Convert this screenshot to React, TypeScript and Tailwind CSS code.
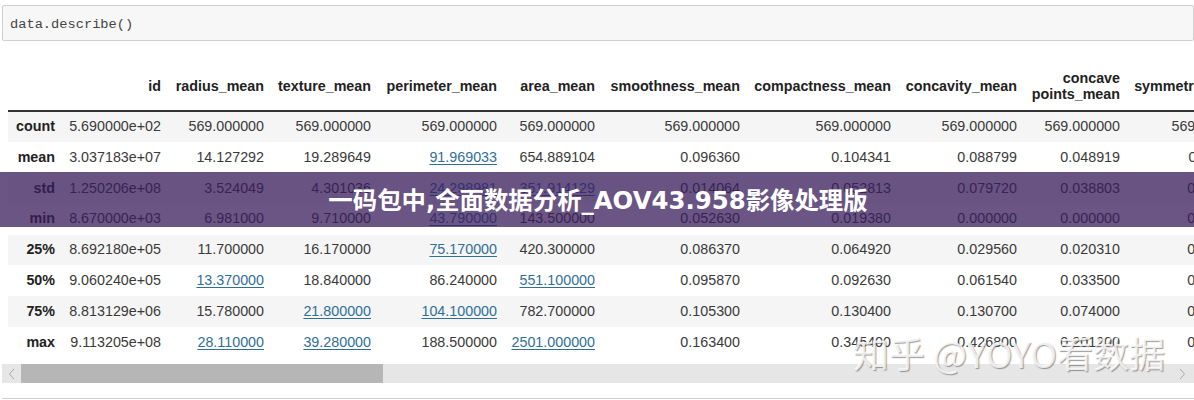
import React from 'react'

const columns = [
  { name: 'id', width: 'w-[106px]' },
  { name: 'radius_mean', width: 'w-[103px]' },
  { name: 'texture_mean', width: 'w-[107px]' },
  { name: 'perimeter_mean', width: 'w-[126px]' },
  { name: 'area_mean', width: 'w-[98px]' },
  { name: 'smoothness_mean', width: 'w-[145px]' },
  { name: 'compactness_mean', width: 'w-[151px]' },
  { name: 'concavity_mean', width: 'w-[126px]' },
  { name: 'concave points_mean', width: 'w-[103px]' },
  { name: 'symmetry_mean', width: 'w-[127px]' },
]

// a leading * marks the cells that are shown as links in the notebook
const rows = [
  ['count', '5.690000e+02', '569.000000', '569.000000', '569.000000', '569.000000', '569.000000', '569.000000', '569.000000', '569.000000', '569.000000'],
  ['mean', '3.037183e+07', '14.127292', '19.289649', '*91.969033', '654.889104', '0.096360', '0.104341', '0.088799', '0.048919', '0.181162'],
  ['std', '1.250206e+08', '3.524049', '4.301036', '*24.298981', '*351.914129', '0.014064', '0.052813', '0.079720', '0.038803', '0.027414'],
  ['min', '8.670000e+03', '6.981000', '9.710000', '*43.790000', '143.500000', '0.052630', '0.019380', '0.000000', '0.000000', '0.106000'],
  ['25%', '8.692180e+05', '11.700000', '16.170000', '*75.170000', '420.300000', '0.086370', '0.064920', '0.029560', '0.020310', '0.161900'],
  ['50%', '9.060240e+05', '*13.370000', '18.840000', '86.240000', '*551.100000', '0.095870', '0.092630', '0.061540', '0.033500', '0.179200'],
  ['75%', '8.813129e+06', '15.780000', '*21.800000', '*104.100000', '782.700000', '0.105300', '0.130400', '0.130700', '0.074000', '0.195700'],
  ['max', '9.113205e+08', '*28.110000', '*39.280000', '188.500000', '*2501.000000', '0.163400', '0.345400', '0.426800', '0.201200', '0.304000'],
]

function Cell({ value }: { value: string }) {
  if (value.startsWith('*')) {
    return <span className="text-[#2f6f96] underline underline-offset-2">{value.slice(1)}</span>
  }
  return <>{value}</>
}

export default function App() {
  return (
    <div className="relative h-[400px] w-[1194px] overflow-hidden bg-white font-['Liberation_Sans',sans-serif] text-[14.3px] text-[#3a3a3a]">
      <div className="pl-[2px] pt-[5px]">
        <div className="h-[36px] rounded-[2px] border border-[#cfcfcf] bg-[#f7f7f7] pl-[7px] pt-[1px] font-['Liberation_Mono',monospace] text-[13.7px] leading-[35px] text-[#444]">
          data.describe()
        </div>
      </div>

      <div className="mt-[22px] overflow-hidden pl-[8px]">
        <table className="w-[1246px] table-fixed border-collapse">
          <colgroup>
            <col className="w-[54px]" />
            {columns.map((col) => (
              <col key={col.name} className={col.width} />
            ))}
          </colgroup>
          <thead>
            <tr className="h-[48px] border-b-2 border-[#333]">
              <th />
              {columns.map((col) => (
                <th key={col.name} className="pb-[1px] pr-[7px] text-right align-middle font-bold leading-[16px] text-[#222]">
                  {col.name}
                </th>
              ))}
            </tr>
          </thead>
          <tbody>
            {rows.map((row, i) => (
              <tr key={row[0]} className={`h-[30.9px] ${i % 2 === 0 ? 'bg-[#f5f5f5]' : 'bg-white'}`}>
                <th className="pr-[7px] text-right font-bold text-[#222]">{row[0]}</th>
                {row.slice(1).map((value, j) => (
                  <td key={j} className="whitespace-nowrap pr-[7px] text-right">
                    <Cell value={value} />
                  </td>
                ))}
              </tr>
            ))}
          </tbody>
        </table>
      </div>

      <div className="ml-[2px] mt-[6px] flex h-[19px] items-stretch bg-[#e6e6e6]">
        <div className="flex w-[19px] items-center justify-center">
          <svg width="8" height="12" viewBox="0 0 8 12" fill="none" stroke="#a8a8a8" strokeWidth="1">
            <path d="M6 1 1.5 6 6 11" />
          </svg>
        </div>
        <div className="w-[362px] bg-[#b6b6b6]" />
        <div className="flex flex-1 items-center justify-end pr-[8px]">
          <svg width="8" height="12" viewBox="0 0 8 12" fill="none" stroke="#a8a8a8" strokeWidth="1">
            <path d="M2 1 6.5 6 2 11" />
          </svg>
        </div>
      </div>
      <div className="ml-[2px] mt-[15px] h-[1px] bg-[#d0d0d0]" />

      {/* title band over the table */}
      <div className="absolute left-0 right-0 top-[172px] flex h-[55px] items-center justify-center bg-[#381c5c]/75 pt-[3px]">
        <span className="pl-[2px] font-['DejaVu_Sans','Noto_Sans_CJK_SC',sans-serif] text-[24.4px] font-bold text-white">
          一码包中,全面数据分析_AOV43.958影像处理版
        </span>
      </div>

      {/* watermark */}
      <div className="absolute left-[853px] top-[330px] whitespace-nowrap font-['Noto_Sans_CJK_SC',sans-serif] text-[36px] leading-[44px] text-white/80 [text-shadow:1px_1px_1px_rgba(90,90,90,0.6)]">
        知乎 @YOYO看数据
      </div>
    </div>
  )
}
